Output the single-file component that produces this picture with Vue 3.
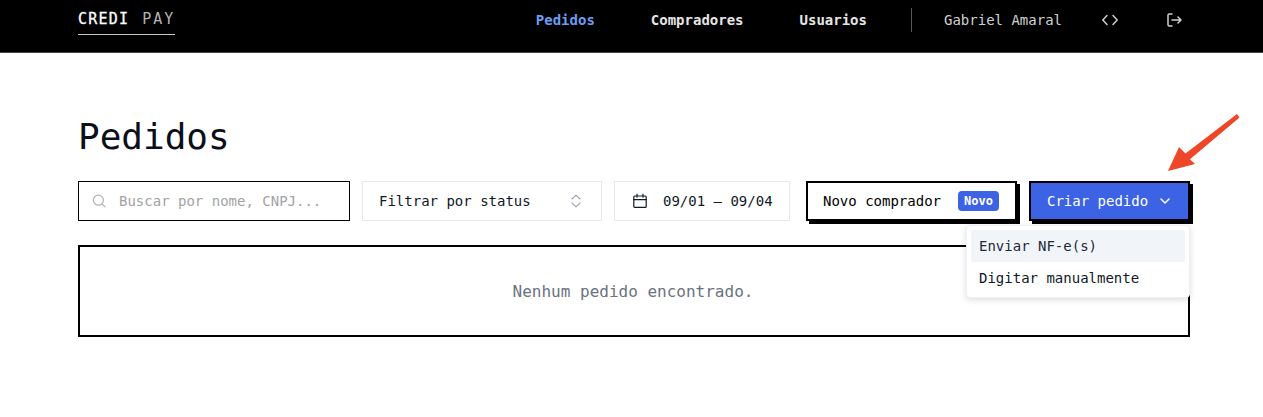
<template>
  <div class="page">
    <header class="topbar">
      <div class="logo"><span class="logo-strong">CREDI</span><span class="logo-light">PAY</span></div>
      <nav class="nav">
        <a class="nav-link active">Pedidos</a>
        <a class="nav-link">Compradores</a>
        <a class="nav-link">Usuarios</a>
        <span class="divider"></span>
        <span class="user">Gabriel Amaral</span>
        <svg class="nav-icon code-icon" width="20" height="20" viewBox="0 0 20 20" fill="none" stroke="currentColor" stroke-width="1.5" stroke-linecap="round" stroke-linejoin="round">
          <path d="M7 5.5 2.8 10 7 14.5" />
          <path d="M13 5.5 17.2 10 13 14.5" />
        </svg>
        <svg class="nav-icon logout-icon" width="20" height="20" viewBox="0 0 20 20" fill="none" stroke="currentColor" stroke-width="1.5" stroke-linecap="round" stroke-linejoin="round">
          <path d="M8 4H5.2C4.5 4 4 4.5 4 5.2v9.6c0 .7.5 1.2 1.2 1.2H8" />
          <path d="M8 10h9M14 7l3 3-3 3" />
        </svg>
      </nav>
    </header>

    <main class="content">
      <h1 class="title">Pedidos</h1>

      <div class="toolbar">
        <div class="field search">
          <svg width="16" height="16" viewBox="0 0 16 16" fill="none" stroke="#b4b4b4" stroke-width="1.2" stroke-linecap="round">
            <circle cx="7.4" cy="7.2" r="5" />
            <path d="m11 10.8 3 3" />
          </svg>
          <span>Buscar por nome, CNPJ...</span>
        </div>
        <div class="field status">
          <span>Filtrar por status</span>
          <svg width="14" height="16" viewBox="0 0 14 16" fill="none" stroke="#9ca3af" stroke-width="1.1" stroke-linecap="round" stroke-linejoin="round">
            <path d="M3 6 7 2.2 11 6" />
            <path d="M3 10 7 13.8 11 10" />
          </svg>
        </div>
        <div class="field dates">
          <svg width="16" height="16" viewBox="0 0 16 16" fill="none" stroke="#111827" stroke-width="1.2" stroke-linecap="round" stroke-linejoin="round">
            <rect x="1.8" y="3" width="12.4" height="11.4" rx="1" />
            <path d="M1.8 6.6h12.4M5 1.2v3M11 1.2v3" />
          </svg>
          <span>09/01 – 09/04</span>
        </div>
        <button class="btn btn-white">
          Novo comprador
          <span class="badge">Novo</span>
        </button>
        <div class="menu-wrap">
          <button class="btn btn-blue">
            Criar pedido
            <svg width="14" height="14" viewBox="0 0 14 14" fill="none" stroke="currentColor" stroke-width="1.5" stroke-linecap="round" stroke-linejoin="round">
              <path d="m3 5 4 4 4-4" />
            </svg>
          </button>
          <div class="menu">
            <div class="menu-item highlighted">Enviar NF-e(s)</div>
            <div class="menu-item">Digitar manualmente</div>
          </div>
        </div>
      </div>

      <div class="empty">Nenhum pedido encontrado.</div>
    </main>

    <svg class="arrow" width="84" height="70" viewBox="0 0 84 70">
      <path d="M1 58 12 34 18.5 40.5 70 1 72.5 4.5 23 46.3 28 51Z" fill="#ee4626" />
    </svg>
  </div>
</template>

<script setup>
</script>

<style>
body {
  background: #fff;
}
</style>

<style scoped>
.page {
  position: relative;
  height: 417px;
  overflow: hidden;
  font-family: "DejaVu Sans Mono", monospace;
  font-size: 14px;
  color: #0b0f19;
  background: #fff;
}

.topbar {
  display: flex;
  align-items: center;
  justify-content: space-between;
  height: 53px;
  padding: 0 0 13px 78px;
  box-sizing: border-box;
  background: #000;
  border-bottom: 1px solid #444;
  color: #fff;
}

.logo {
  display: flex;
  gap: 13px;
  width: 97px;
  box-sizing: border-box;
  margin-top: 5px;
  padding-bottom: 5px;
  border-bottom: 1px solid #c8c8c8;
  font-size: 15px;
  line-height: 19px;
}

.logo-strong {
  letter-spacing: 1.2px;
  -webkit-text-stroke: 0.3px #fff;
}

.logo-light {
  color: #b4b4b4;
  font-weight: 400;
  letter-spacing: 2px;
}

.nav {
  display: flex;
  align-items: center;
  padding-top: 1px;
  padding-right: 79px;
}

.nav-link {
  margin-right: 56px;
  font-weight: 700;
  color: #e5e5e5;
}

.nav-link.active {
  color: #6c9cf0;
}

.nav-link:nth-child(3) {
  margin-right: 44px;
}

.divider {
  width: 1px;
  height: 24px;
  margin-right: 32px;
  background: #555;
}

.user {
  margin-right: 38px;
  color: #d0d0d0;
}

.nav-icon {
  color: #d0d0d0;
}

.code-icon {
  margin-right: 44px;
}

.content {
  width: 1112px;
  margin-left: 78px;
}

.title {
  margin: 64px 0 24px;
  font-size: 36px;
  font-weight: 400;
  line-height: 40px;
  color: #0b0f19;
}

.toolbar {
  display: flex;
  align-items: flex-start;
  gap: 12px;
  height: 40px;
}

.field {
  display: flex;
  align-items: center;
  height: 40px;
  box-sizing: border-box;
  border: 1px solid #e5e7eb;
  color: #111827;
}

.search {
  width: 272px;
  gap: 12px;
  padding-left: 12px;
  border-color: #000;
  color: #a3a3a3;
}

.status {
  width: 240px;
  justify-content: space-between;
  padding: 0 18px 0 16px;
}

.dates {
  width: 176px;
  gap: 15px;
  padding-left: 17px;
  margin-right: 4px;
}

.btn {
  display: flex;
  align-items: center;
  height: 40px;
  box-sizing: border-box;
  border: 2px solid #000;
  box-shadow: 3px 3px 0 #000;
  font: inherit;
  border-radius: 0;
}

.btn-white {
  width: 211px;
  gap: 17px;
  padding: 0 0 0 15px;
  background: #fff;
  color: #000;
}

.badge {
  padding: 0 6px;
  height: 20px;
  line-height: 20px;
  border-radius: 4px;
  background: #3b63e3;
  color: #fff;
  font-size: 12px;
  font-weight: 700;
}

.menu-wrap {
  position: relative;
  width: 161px;
}

.btn-blue {
  width: 100%;
  gap: 10px;
  padding: 0 0 0 16px;
  background: #3b63e3;
  color: #fff;
}

.menu {
  position: absolute;
  top: 44px;
  right: 0;
  z-index: 2;
  width: 224px;
  box-sizing: border-box;
  padding: 4px 4px 3px;
  border-radius: 4px;
  background: #fff;
  border: 1px solid #eef0f3;
  box-shadow: 0 2px 6px rgba(15, 23, 42, 0.14);
}

.menu-item {
  height: 32px;
  padding: 0 8px;
  line-height: 32px;
  border-radius: 2px;
  color: #111827;
}

.menu-item.highlighted {
  background: #f1f5f9;
  color: #1f2937;
}

.empty {
  height: 92px;
  margin-top: 24px;
  padding-right: 2px;
  box-sizing: border-box;
  border: 2px solid #000;
  display: flex;
  align-items: center;
  justify-content: center;
  font-size: 16px;
  color: #6b7280;
}

.arrow {
  position: absolute;
  top: 113px;
  left: 1167px;
}
</style>
